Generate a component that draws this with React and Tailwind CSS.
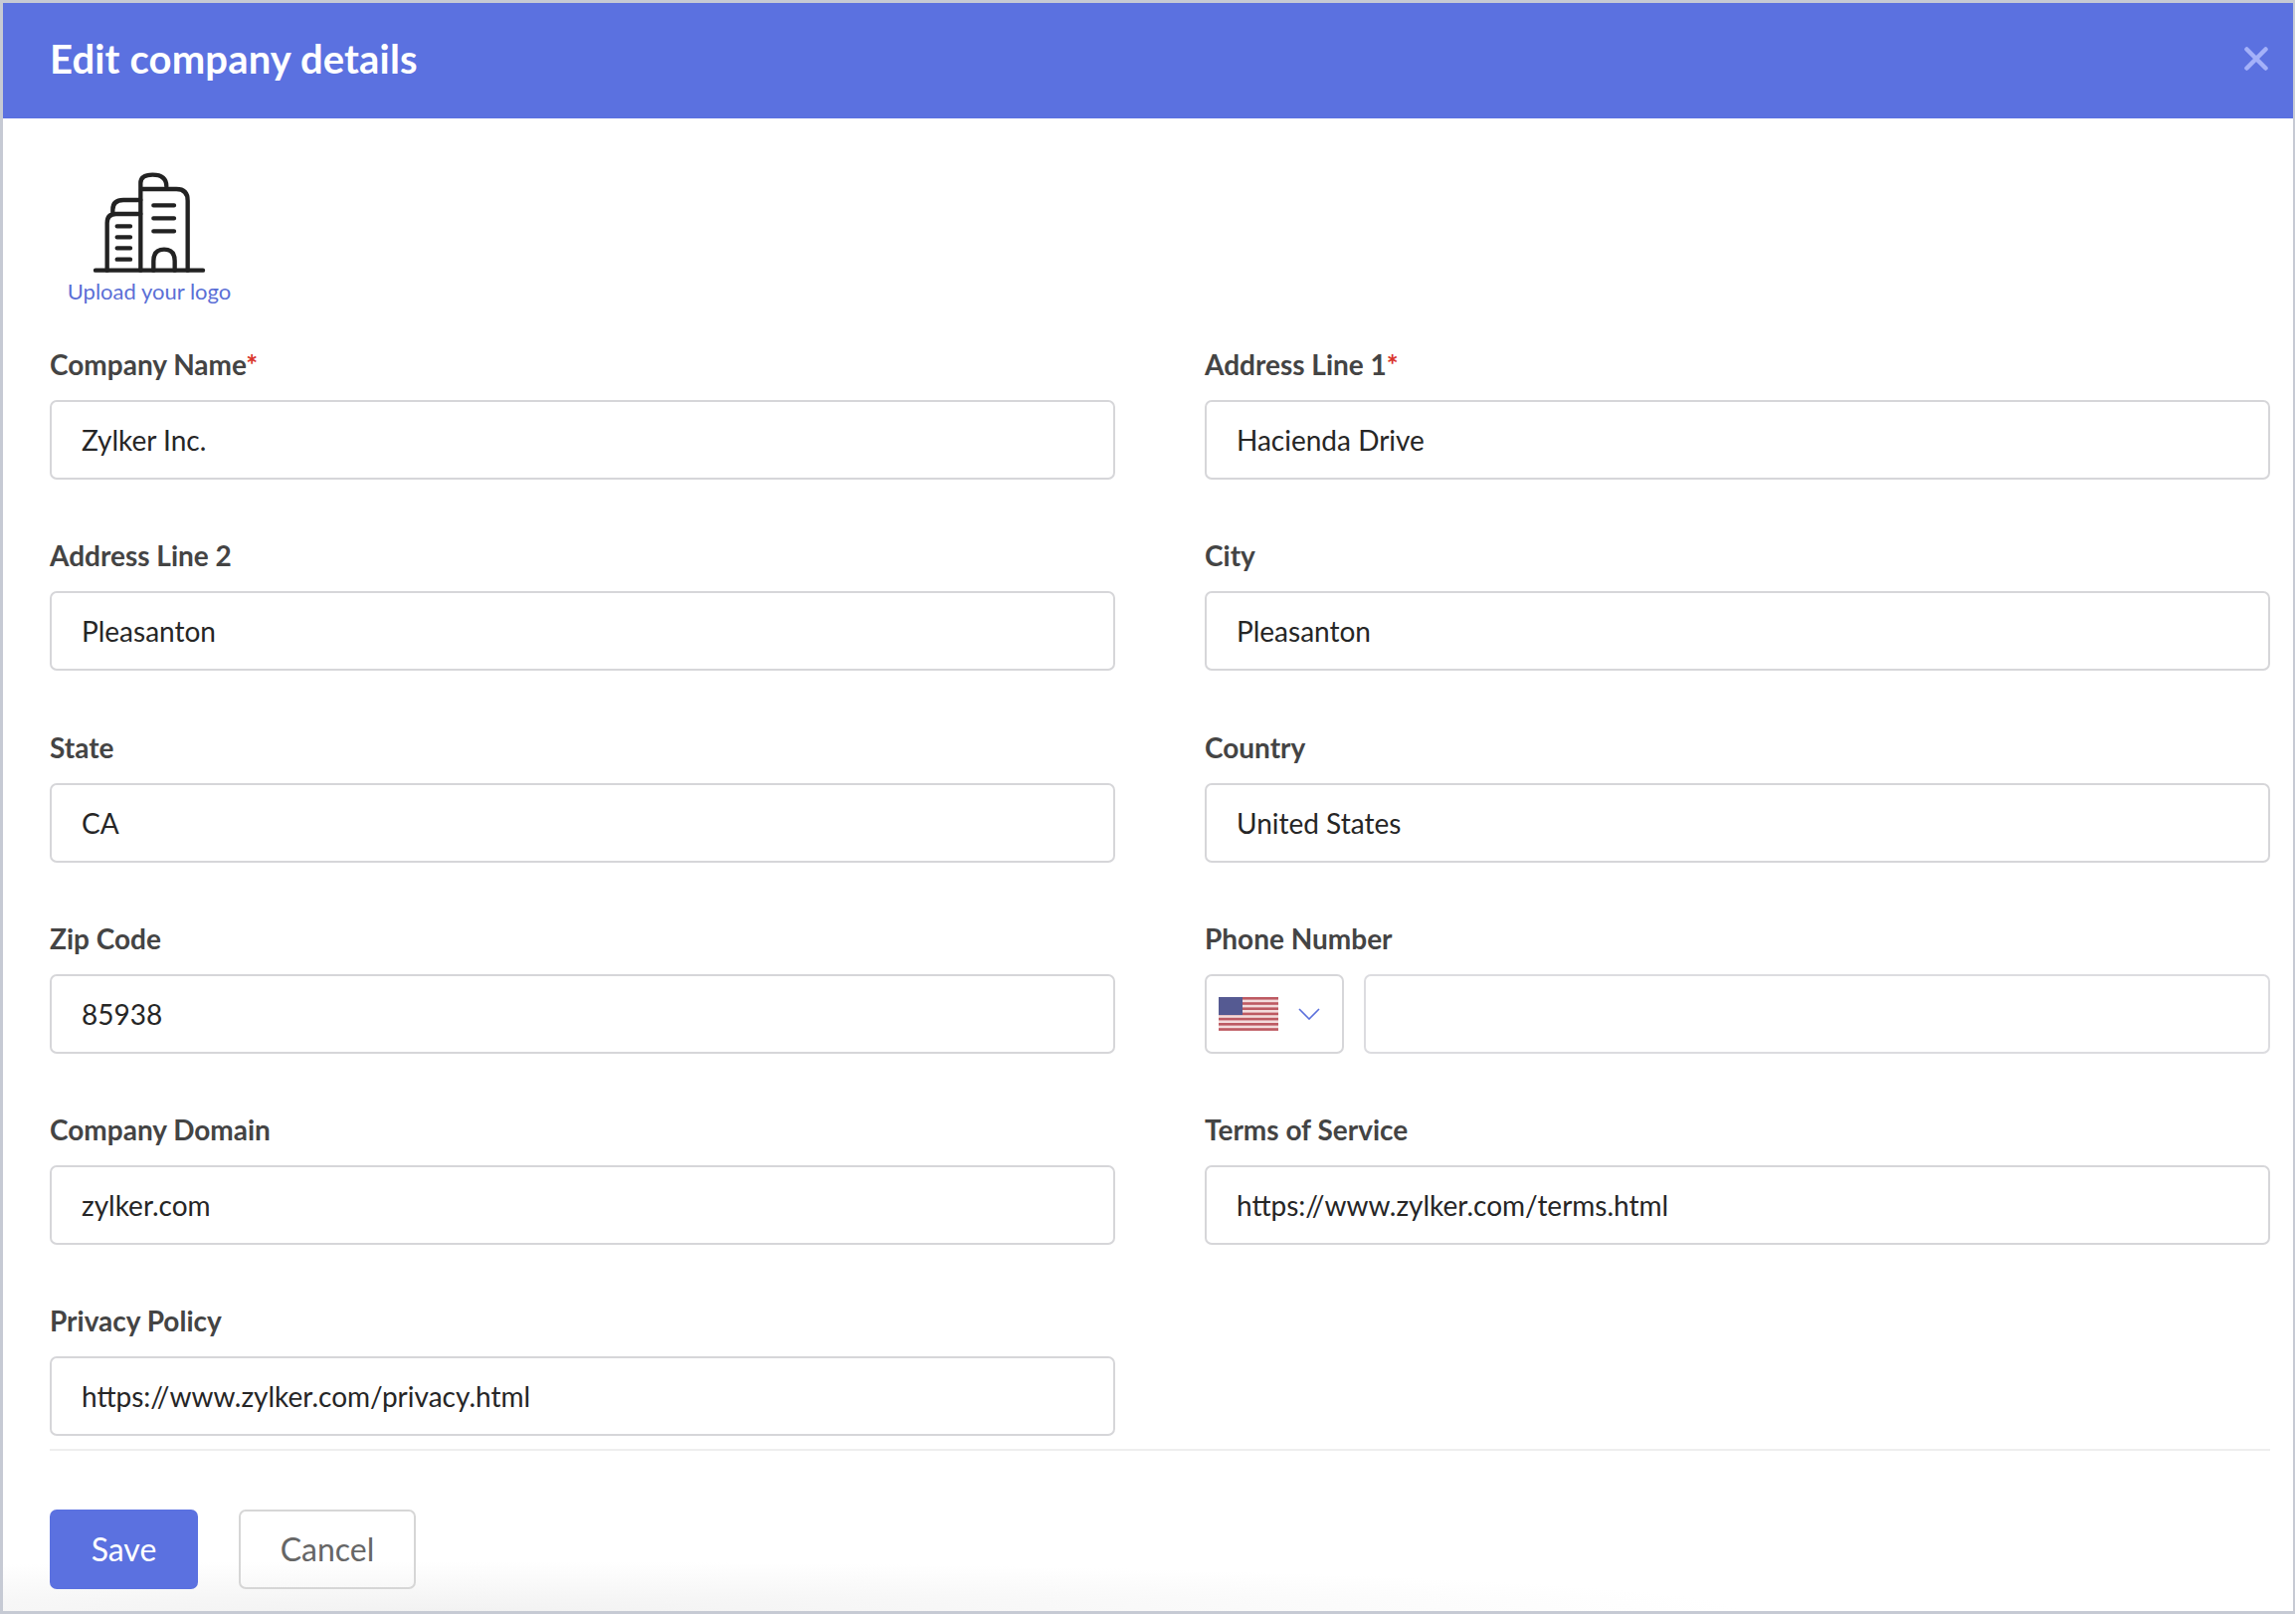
// App.jsx - Edit company details dialog
const font = { fontFamily: '"Lato", "Noto Sans", sans-serif' };

function Field({ label, required, value }) {
  return (
    <div>
      <label className="block h-[61px] pt-[5px] text-[28px] leading-[40px] font-bold text-[#444444]">
        {label}
        {required && <span className="text-[#d9342b]">*</span>}
      </label>
      <div className="flex items-center h-[80px] px-[30px] rounded-[7px] border-[2px] border-[#d6d6d9] text-[28px] text-[#262626]">
        {value}
      </div>
    </div>
  );
}

function UsFlag() {
  const stripes = [0, 1, 2, 3, 4, 5, 6];
  return (
    <svg width="60" height="34" viewBox="0 0 60 34" className="blur-[0.7px]">
      <rect width="60" height="34" fill="#f3dcdc" />
      {stripes.map((i) => (
        <rect key={i} y={i * 5.2} width="60" height="2.6" fill="#bd5a62" />
      ))}
      <rect width="24" height="18" fill="#555a92" />
    </svg>
  );
}

function PhoneField() {
  return (
    <div>
      <label className="block h-[61px] pt-[5px] text-[28px] leading-[40px] font-bold text-[#444444]">
        Phone Number
      </label>
      <div className="flex gap-[20px]">
        <div className="flex items-center w-[140px] h-[80px] pl-[12px] rounded-[7px] border-[2px] border-[#d6d6d9]">
          <UsFlag />
          <svg width="22" height="12" viewBox="0 0 22 12" fill="none" className="ml-[20px]">
            <path d="M1 1 L11 11 L21 1" stroke="#5b70dc" strokeWidth="1.6" />
          </svg>
        </div>
        <div className="flex-1 h-[80px] rounded-[7px] border-[2px] border-[#dcdce0]" />
      </div>
    </div>
  );
}

function BuildingIcon() {
  return (
    <svg width="120" height="110" viewBox="270 510 360 330" fill="none" stroke="#222222" strokeWidth="13" strokeLinecap="round" strokeLinejoin="round">
      <path d="M288 815 H612" />
      <path d="M323 815 V672 Q323 645 350 645 H424" />
      <path d="M340 640 V632 Q340 603 372 603 H424" />
      <path d="M424 815 V570 H532 Q566 570 566 605 V815" />
      <path d="M424 565 V552 Q424 527 460 527 Q502 527 502 562" />
      <path d="M353 682 H393 M353 715 H393 M353 748 H393 M353 782 H393" />
      <path d="M463 619 H525 M463 658 H525 M463 697 H525" />
      <path d="M463 815 V787 Q463 752 495 752 Q527 752 527 787 V815" />
    </svg>
  );
}

export default function App() {
  return (
    <div style={font} className="w-[2308px] h-[1624px] bg-white pr-[1px] pb-[2px]">
      <div className="flex flex-col h-full border-[3px] border-r-[2px] border-[#c6cad4]">
        <div className="flex items-center justify-between h-[116px] shrink-0 pl-[47px] pr-[25px] pb-[5px] bg-[#5b71e0]">
          <h1 className="text-[40px] font-bold text-white tracking-[0.15px]">Edit company details</h1>
          <svg width="24" height="24" viewBox="0 0 24 24" fill="none" stroke="#a4b1f9" strokeWidth="4.5" strokeLinecap="round">
            <path d="M2.5 2.5 L21.5 21.5 M21.5 2.5 L2.5 21.5" />
          </svg>
        </div>

        <div className="flex-1 px-[47px]">
          <div className="flex flex-col items-center w-[200px] pt-[51px] h-[222px]">
            <BuildingIcon />
            <span className="text-[22px] leading-[26px] text-[#5b6fd6] whitespace-nowrap">Upload your logo</span>
          </div>
          <div className="grid grid-cols-2 gap-x-[90px] gap-y-[51.3px] w-[2232px]">
            <Field label="Company Name" required value="Zylker Inc." />
            <Field label="Address Line 1" required value="Hacienda Drive" />
            <Field label="Address Line 2" value="Pleasanton" />
            <Field label="City" value="Pleasanton" />
            <Field label="State" value="CA" />
            <Field label="Country" value="United States" />
            <Field label="Zip Code" value="85938" />
            <PhoneField />
            <Field label="Company Domain" value="zylker.com" />
            <Field label="Terms of Service" value="https://www.zylker.com/terms.html" />
            <Field label="Privacy Policy" value="https://www.zylker.com/privacy.html" />
          </div>
        </div>

        <div className="shrink-0 h-[163px] px-[47px] bg-[radial-gradient(ellipse_1300px_50px_at_450px_100%,#f2f2f2,transparent)]">
          <div className="border-t-[2px] border-[#eeeeee] w-[2232px]" />
          <div className="flex gap-[41px] pt-[59px]">
            <button className="w-[149px] h-[80px] rounded-[7px] bg-[#5b71e0] text-white text-[32px]">Save</button>
            <button className="w-[178px] h-[80px] rounded-[7px] border-[2px] border-[#d6d6d6] text-[#666666] text-[32px]">Cancel</button>
          </div>
        </div>
      </div>
    </div>
  );
}
